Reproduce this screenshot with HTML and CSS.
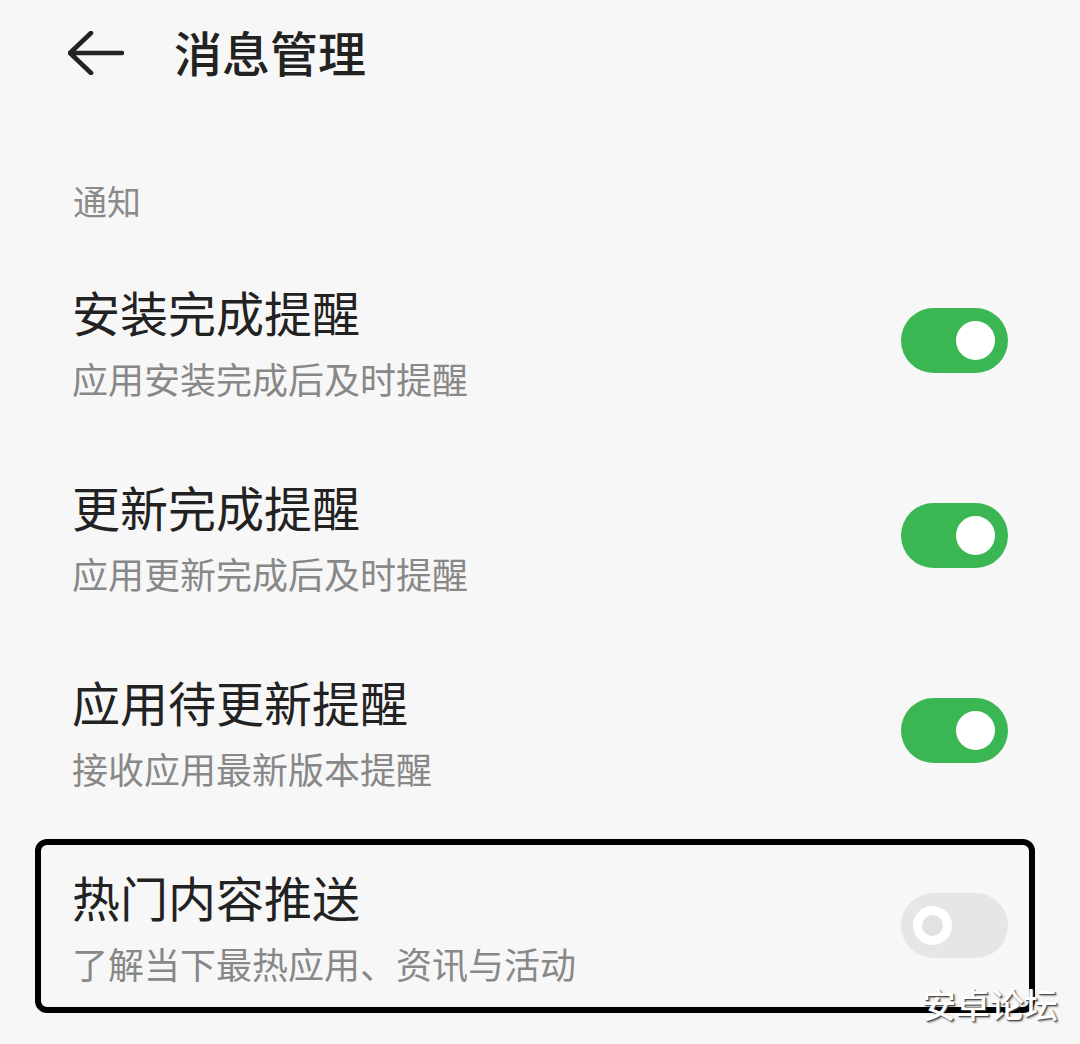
FILE: index.html
```html
<!DOCTYPE html>
<html lang="zh-CN">
<head>
<meta charset="utf-8">
<title>消息管理</title>
<link rel="stylesheet" href="styles.css">
</head>
<body>
<div class="page">
  <header class="topbar">
    <svg class="back" width="56" height="44" viewBox="0 0 56 44" aria-hidden="true">
      <path d="M2 22 H54 M23 2 L2 22 L23 42" fill="none" stroke="#222" stroke-width="4.6" stroke-linecap="round" stroke-linejoin="round"/>
    </svg>
    <h1 class="title">消息管理</h1>
  </header>

  <div class="section-label">通知</div>

  <div class="row">
    <div class="texts">
      <div class="row-title">安装完成提醒</div>
      <div class="row-sub">应用安装完成后及时提醒</div>
    </div>
    <div class="switch on"><span class="knob"></span></div>
  </div>

  <div class="row">
    <div class="texts">
      <div class="row-title">更新完成提醒</div>
      <div class="row-sub">应用更新完成后及时提醒</div>
    </div>
    <div class="switch on"><span class="knob"></span></div>
  </div>

  <div class="row">
    <div class="texts">
      <div class="row-title">应用待更新提醒</div>
      <div class="row-sub">接收应用最新版本提醒</div>
    </div>
    <div class="switch on"><span class="knob"></span></div>
  </div>

  <div class="row highlighted">
    <div class="texts">
      <div class="row-title">热门内容推送</div>
      <div class="row-sub">了解当下最热应用、资讯与活动</div>
    </div>
    <div class="switch off"><span class="knob"></span></div>
    <div class="highlight-box"></div>
  </div>

  <div class="watermark">安卓论坛</div>
</div>
</body>
</html>
```

FILE: styles.css
```css
* { box-sizing: border-box; }
html, body {
  margin: 0;
  padding: 0;
  background: #f7f7f7;
}
body {
  font-family: "Noto Sans CJK SC", "Noto Sans", sans-serif;
  color: #222;
  overflow: hidden;
}
.page {
  position: relative;
  width: 1080px;
  height: 1044px;
  background: #f7f7f7;
}
.topbar {
  height: 108px;
  display: flex;
  align-items: center;
  padding-left: 68px;
}
.back {
  display: block;
  margin-top: -2px;
}
.title {
  margin: -6px 0 0 50px;
  font-size: 48px;
  font-weight: 500;
  line-height: 60px;
  color: #222;
  letter-spacing: 0;
}
.section-label {
  margin-top: 68px;
  padding-left: 73px;
  font-size: 34px;
  line-height: 50px;
  color: #8a8a8a;
}
.row {
  position: relative;
  height: 195px;
  display: flex;
  align-items: center;
  justify-content: space-between;
  padding: 0 72px 0 72px;
}
.section-label + .row { margin-top: 22px; }
.row-title {
  font-size: 48px;
  line-height: 64px;
  color: #222;
}
.row-sub {
  font-size: 36px;
  line-height: 70px;
  color: #888;
}
.switch {
  position: relative;
  width: 107px;
  height: 65px;
  border-radius: 33px;
  margin-bottom: 10px;
  flex: none;
}
.switch.on { background: #3ab753; }
.switch.off { background: #e6e6e6; }
.knob {
  position: absolute;
  top: 13px;
  width: 39px;
  height: 39px;
  border-radius: 50%;
}
.switch.on .knob {
  right: 13px;
  background: #fff;
}
.switch.off .knob {
  left: 12px;
  background: #e2e2e2;
  border: 9px solid #fff;
}
.highlight-box {
  position: absolute;
  left: 35px;
  top: 6px;
  width: 1000px;
  height: 174px;
  border: 6px solid #000;
  border-radius: 12px;
  pointer-events: none;
}
.watermark {
  position: absolute;
  left: 922px;
  top: 982px;
  font-size: 34px;
  line-height: 44px;
  font-weight: 500;
  color: #fff;
  text-shadow: 1px 1px 1px #444, 2px 2px 2px rgba(0,0,0,0.35);
  letter-spacing: 0;
}
```
